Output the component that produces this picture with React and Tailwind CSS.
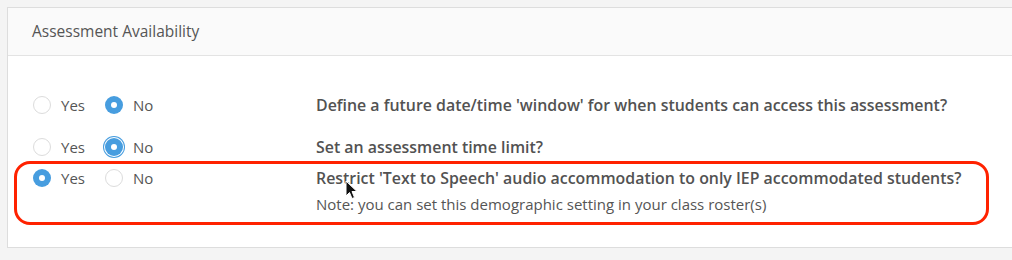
import React from "react";

const rows = [
  { value: "no", question: "Define a future date/time 'window' for when students can access this assessment?" },
  { value: "no", focus: true, question: "Set an assessment time limit?" },
  {
    value: "yes",
    question: "Restrict 'Text to Speech' audio accommodation to only IEP accommodated students?",
    note: "Note: you can set this demographic setting in your class roster(s)",
  },
];

const Radio = ({ checked, focus, label }) => (
  <label className="flex items-center gap-[10px]">
    <span
      className={
        checked
          ? "flex h-[18px] w-[18px] items-center justify-center rounded-full bg-[#479ddf]" +
            (focus ? " ring-1 ring-[#479ddf] ring-offset-1" : "")
          : "h-[18px] w-[18px] rounded-full border border-[#dcdcdc] bg-white"
      }
    >
      {checked && <span className="h-[6px] w-[6px] rounded-full bg-white" />}
    </span>
    <span className="text-[15px] text-[#555]">{label}</span>
  </label>
);

export default function App() {
  return (
    <div className="min-h-[260px] bg-[#f4f4f4] pl-[7px] pt-[7px] font-['Open_Sans',sans-serif]">
      <div className="relative w-[1020px] border border-[#dddddd] bg-white">
        <div className="flex h-[48px] items-center border-b border-[#e3e3e3] bg-[#fafafa] px-[24px]">
          <h2 className="text-[15.5px] text-[#555]">Assessment Availability</h2>
        </div>
        <div className="px-[25px] pb-[34px] pt-[39px]">
          {rows.map((row, i) => (
            <div
              key={i}
              className={"grid grid-cols-[283px_1fr] " + (i === 0 ? "mb-[22px]" : i === 1 ? "mb-[11px]" : "")}
            >
              <div className="flex h-[20px] items-center gap-[20px]">
                <Radio checked={row.value === "yes"} label="Yes" />
                <Radio checked={row.value === "no"} focus={row.focus} label="No" />
              </div>
              <div>
                <p className="text-[15.9px] font-semibold leading-[20px] text-[#525252]">{row.question}</p>
                {row.note && (
                  <p className="mt-[7px] text-[15px] leading-[18px] text-[#555]">{row.note}</p>
                )}
              </div>
            </div>
          ))}
        </div>
        <div className="pointer-events-none absolute left-[6px] top-[153px] h-[64px] w-[975px] rounded-[16px] border-[3px] border-[#ff2200]" />
        <svg
          className="pointer-events-none absolute left-[337px] top-[172px]"
          width="14"
          height="20"
          viewBox="0 0 14 20"
        >
          <path d="M1 1 L1 16 L4.5 12.5 L7 18.5 L9.5 17.5 L7 11.5 L12 11.5 Z" fill="#111" stroke="#fff" strokeWidth="1" />
        </svg>
      </div>
    </div>
  );
}
